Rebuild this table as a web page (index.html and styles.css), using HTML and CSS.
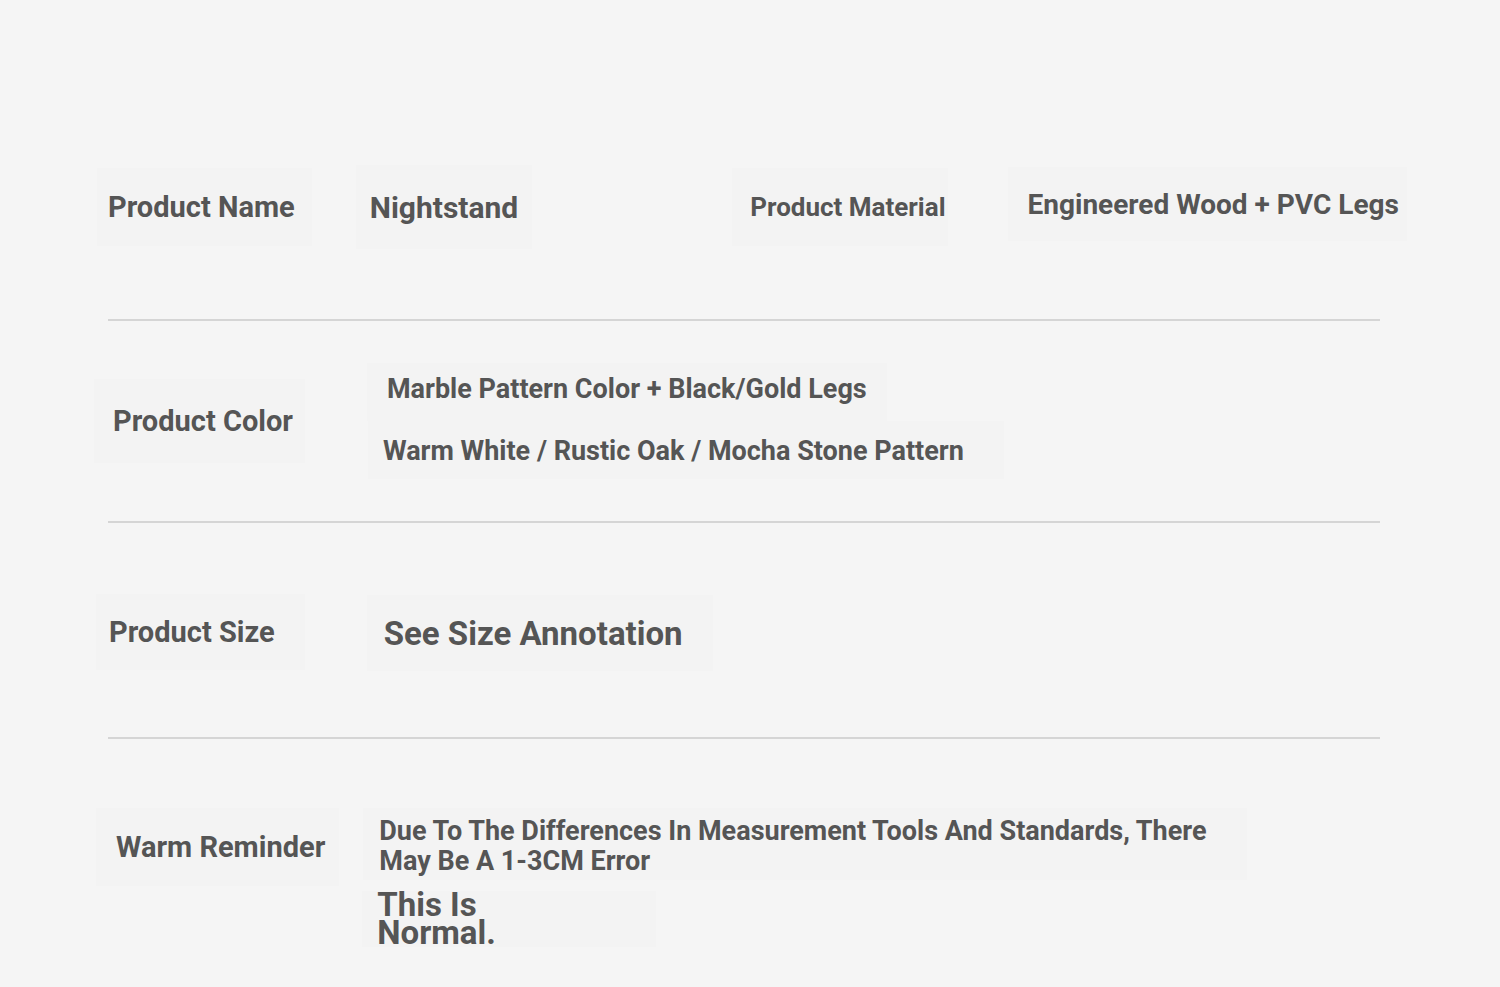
FILE: index.html
```html
<!DOCTYPE html>
<html lang="en">
<head>
<meta charset="utf-8">
<title>Product Specs</title>
<link rel="stylesheet" href="styles.css">
</head>
<body>
<main class="sheet">
  <section class="row row-name">
    <div class="cell label l-name"><span class="t">Product Name</span></div>
    <div class="cell value v-name"><span class="t">Nightstand</span></div>
    <div class="cell label l-material"><span class="t">Product Material</span></div>
    <div class="cell value v-material"><span class="t">Engineered Wood + PVC Legs</span></div>
  </section>
  <hr class="rule">
  <section class="row row-color">
    <div class="cell label l-color"><span class="t">Product Color</span></div>
    <div class="stack">
      <div class="cell value v-color1"><span class="t">Marble Pattern Color + Black/Gold Legs</span></div>
      <div class="cell value v-color2"><span class="t">Warm White / Rustic Oak / Mocha Stone Pattern</span></div>
    </div>
  </section>
  <hr class="rule">
  <section class="row row-size">
    <div class="cell label l-size"><span class="t">Product Size</span></div>
    <div class="cell value v-size"><span class="t">See Size Annotation</span></div>
  </section>
  <hr class="rule">
  <section class="row row-warm">
    <div class="cell label l-warm"><span class="t">Warm Reminder</span></div>
    <div class="stack">
      <div class="cell value v-warm1"><span class="t">Due To The Differences In Measurement Tools And Standards, There<br>May Be A 1-3CM Error</span></div>
      <div class="cell value v-warm2"><span class="t">This Is<br>Normal.</span></div>
    </div>
  </section>
</main>
</body>
</html>
```
FILE: styles.css
```css
html, body {
  margin: 0;
  padding: 0;
  background: #f5f5f5;
}
body {
  font-family: Roboto, "Liberation Sans", sans-serif;
  font-weight: 700;
  color: #555555;
  width: 1500px;
  height: 987px;
  overflow: hidden;
}
.sheet {
  padding: 167px 120px 0 108px;
}
.rule {
  margin: 0;
  border: 0;
  height: 2px;
  background: #d5d5d5;
  width: 1272px;
}
.row {
  display: flex;
  align-items: center;
}
.cell {
  background: #f3f3f3;
  display: flex;
  align-items: center;
}
.t {
  display: inline-block;
  white-space: nowrap;
}
.stack {
  display: flex;
  flex-direction: column;
  align-items: flex-start;
}

/* row 1 */
.row-name {
  height: 80px;
  margin-bottom: 72px;
}
.l-name { margin-left: -11px; padding: 0 17px 0 11px; height: 78px; font-size: 29px; }
.v-name { margin-left: 44px; padding: 0 14px; height: 84px; font-size: 30px; }
.l-material { margin-left: 200px; padding: 0 2px 0 18px; height: 78px; font-size: 26px; }
.v-material { margin-left: 60px; padding: 0 8px 0 20px; height: 74px; font-size: 28px; margin-top: -6px; }

/* row 2 */
.row-color { height: 200px; }
.l-color { margin-left: -14px; padding: 0 12px 0 19px; height: 84px; font-size: 29px; }
.v-color1 { margin-left: 62px; padding: 10px 20px 16px 20px; font-size: 27px; }
.v-color2 { margin-left: 63px; padding: 14px 40px 12px 15px; font-size: 27px; }

/* row 3 */
.row-size { height: 214px; }
.l-size { margin-left: -12px; padding: 0 30px 0 13px; height: 76px; font-size: 29px; margin-top: 4px; }
.v-size { margin-left: 62px; padding: 0 30px 0 17px; height: 76px; font-size: 33px; margin-top: 6px; }

/* row 4 */
.row-warm { height: 248px; align-items: flex-start; padding-top: 69px; box-sizing: border-box; }
.l-warm { margin-left: -12px; padding: 0 14px 0 20px; height: 78px; font-size: 29px; }
.v-warm1 { margin-left: 24px; padding: 8px 40px 4px 16px; font-size: 27px; line-height: 30px; }
.v-warm2 { margin-left: 23px; margin-top: 11px; padding: 0 160px 0 15px; font-size: 33px; line-height: 28px; }
```
